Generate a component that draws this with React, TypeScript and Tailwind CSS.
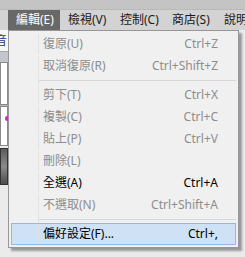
import React from "react";

type Item =
  | { sep: true }
  | { label: string; key?: string; disabled?: boolean; active?: boolean };

const items: Item[] = [
  { label: "復原(U)", key: "Ctrl+Z", disabled: true },
  { label: "取消復原(R)", key: "Ctrl+Shift+Z", disabled: true },
  { sep: true },
  { label: "剪下(T)", key: "Ctrl+X", disabled: true },
  { label: "複製(C)", key: "Ctrl+C", disabled: true },
  { label: "貼上(P)", key: "Ctrl+V", disabled: true },
  { label: "刪除(L)", disabled: true },
  { label: "全選(A)", key: "Ctrl+A" },
  { label: "不選取(N)", key: "Ctrl+Shift+A", disabled: true },
  { sep: true },
  { label: "偏好設定(F)...", key: "Ctrl+,", active: true },
];

const menus = ["編輯(E)", "檢視(V)", "控制(C)", "商店(S)", "說明(H)"];

export default function App() {
  return (
    <div
      className="relative w-[245px] h-[257px] overflow-hidden bg-[#ebebeb] text-[12px] leading-none"
      style={{ fontFamily: '"Noto Sans", "Noto Sans CJK TC", sans-serif' }}
    >
      <div className="h-[10px] bg-[#c4c4c4] border-b border-[#b9b9b9]" />
      <div className="flex h-[20px] bg-[#d3d3d3] pl-[8px] whitespace-nowrap">
        {menus.map((m, i) => (
          <div
            key={m}
            className={`flex shrink-0 items-center w-[52px] pl-[8px] ${
              i === 0 ? "bg-[#686868] text-white" : "text-[#1a1a1a]"
            }`}
          >
            {m}
          </div>
        ))}
      </div>

      {/* content behind the menu */}
      <div className="flex flex-col w-[8px]">
        <div className="h-[4px] bg-[#f6f6f6]" />
        <div className="h-[14px] bg-[#f6f6f6] overflow-hidden text-[#1f3a66] flex items-center">
          <span className="ml-[-5px]">音</span>
        </div>
        <div className="h-[3px] bg-[#f6f6f6]" />
        <div className="h-[11px] bg-[#c3c6cc] border-t border-[#a9a9a9]" />
        <div className="h-[43px] bg-white border border-[#8a8a8a]" />
        <div className="h-[1px] bg-[#b5b5b5]" />
        <div className="h-[40px] bg-white border border-[#8a8a8a] relative">
          <div className="absolute right-[-2px] top-[9px] w-[4px] h-[5px] bg-[#e020d0] rounded-full" />
        </div>
        <div className="h-[2px]" />
        <div className="h-[37px] bg-gradient-to-b from-[#5c5c5c] via-[#8a8a8a] to-[#4f4f4f] border border-[#333]" />
      </div>

      {/* dropdown */}
      <div className="absolute left-[8px] top-[30px] w-[231px] bg-[#f0f0f0] border border-[#979797] p-[2px] shadow-[3px_3px_2px_rgba(0,0,0,0.35)] whitespace-nowrap">
        {items.map((it, i) =>
          "sep" in it ? (
            <div key={i} className="flex h-[7px]">
              <div className="w-[28px] border-r border-[#e2e2e2]" />
              <div className="flex-1 flex items-center">
                <div className="w-full h-[1px] bg-[#d7d7d7]" />
              </div>
            </div>
          ) : (
            <div
              key={i}
              className={`flex h-[22px] items-stretch border ${
                it.active
                  ? "bg-[#cfe2f5] border-[#90b9e6]"
                  : "border-transparent"
              } ${it.disabled ? "text-[#8d8d8d]" : "text-black"}`}
            >
              <div className="w-[27px] border-r border-[#e2e2e2]" />
              <div className="flex-1 flex items-center pl-[4px]">{it.label}</div>
              <div className="flex items-center pr-[17px]">{it.key}</div>
            </div>
          )
        )}
      </div>
    </div>
  );
}
